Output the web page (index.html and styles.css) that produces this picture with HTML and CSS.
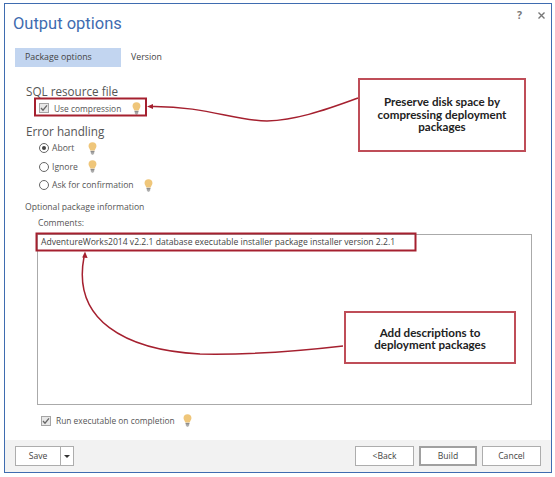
FILE: index.html
```html
<!DOCTYPE html>
<html lang="en">
<head>
  <meta charset="UTF-8">
  <title>Output options</title>
  <link rel="stylesheet" href="styles.css">
</head>
<body>
  <svg class="defs" width="0" height="0">
    <symbol id="bulb" viewBox="0 0 10 14">
      <path d="M5 0C2.2 0 .6 1.9.6 4.1c0 2 1.5 3.2 2 5.2h4.8c.5-2 2-3.200 2-5.200C9.400 1.900 7.800 0 5 0z" fill="#efc67a"/>
      <rect x="2.800" y="9.600" width="4.400" height="1.500" fill="#8d8d8d"/>
      <rect x="3.200" y="11.300" width="3.600" height="1.300" fill="#777"/>
      <rect x="4" y="12.800" width="2" height="1" fill="#999"/>
    </symbol>
  </svg>

  <div class="window">
    <div class="content">
      <div class="title-row">
        <h1>Output options</h1>
        <div class="window-btns">
          <span class="help">?</span>
          <svg class="close" width="7" height="7" viewBox="0 0 7 7"><path d="M.5 .5l6 6M6.500 .5l-6 6" stroke="#777" stroke-width="1.400"/></svg>
        </div>
      </div>

      <div class="tabs">
        <div class="tab active">Package options</div>
        <div class="tab">Version</div>
      </div>

      <h2 class="group-title first">SQL resource file</h2>
      <div class="option check-row">
        <span class="checkbox"><svg width="8" height="8" viewBox="0 0 8 8"><path d="M1 4l2 2.200L7 1.300" fill="none" stroke="#666" stroke-width="1.300"/></svg></span>
        <span>Use compression</span>
        <svg class="bulb"><use href="#bulb"/></svg>
      </div>

      <h2 class="group-title second">Error handling</h2>
      <div class="radios">
        <div class="option radio-row"><span class="radio selected"></span><span class="short">Abort</span><svg class="bulb"><use href="#bulb"/></svg></div>
        <div class="option radio-row"><span class="radio"></span><span class="short">Ignore</span><svg class="bulb"><use href="#bulb"/></svg></div>
        <div class="option radio-row"><span class="radio"></span><span>Ask for confirmation</span><svg class="bulb"><use href="#bulb"/></svg></div>
      </div>

      <div class="info-title">Optional package information</div>
      <div class="comments-label">Comments:</div>
      <div class="comments">AdventureWorks2014 v2.2.1 database executable installer package installer version 2.2.1</div>

      <div class="option run-row">
        <span class="checkbox"><svg width="8" height="8" viewBox="0 0 8 8"><path d="M1 4l2 2.200L7 1.300" fill="none" stroke="#666" stroke-width="1.300"/></svg></span>
        <span>Run executable on completion</span>
        <svg class="bulb"><use href="#bulb"/></svg>
      </div>
    </div>

    <div class="footer">
      <div class="split-btn">
        <button class="btn save-btn">Save</button>
        <button class="btn caret-btn"><span class="caret"></span></button>
      </div>
      <div class="footer-right">
        <button class="btn">&lt;Back</button>
        <button class="btn default">Build</button>
        <button class="btn">Cancel</button>
      </div>
    </div>
  </div>

  <!-- annotations on top of the dialog -->
  <svg class="arrows" width="555" height="477" viewBox="0 0 555 477">
    <rect x="35" y="98.500" width="111" height="17" class="mark"/>
    <rect x="36.500" y="233.500" width="379" height="17" class="mark"/>
    <path d="M358 98C320 112 295 120 267 121C235 121 205 106 152 106.500" class="line"/>
    <path d="M147 106.500l6-2.600v5.200z" fill="#a5202f"/>
    <path d="M343 346C300 351 250 355 200 354C125 350 72 320 84 257" class="line"/>
    <path d="M85 251.500l2.600 6.500l-5.400-.5z" fill="#a5202f"/>
  </svg>
  <div class="callout callout-disk">Preserve disk space by compressing deployment packages</div>
  <div class="callout callout-desc">Add descriptions to deployment packages</div>
</body>
</html>
```

FILE: styles.css
```css
body {
  margin: 0;
  width: 555px;
  height: 477px;
  background: white;
  font-family: "Open Sans", sans-serif;
  font-size: 8.600px;
  color: #555;
  overflow: hidden;
}
.defs {
  position: absolute;
}
.window {
  box-sizing: border-box;
  width: 548px;
  height: 470px;
  margin: 3px 0 0 4px;
  border: 1px solid #3f6cb0;
  display: flex;
  flex-direction: column;
}
.content {
  flex: 1;
  padding: 0 11px 0 10px;
}
.title-row {
  display: flex;
  justify-content: space-between;
  height: 44px;
}
h1 {
  margin: 6px 0 0 -2px;
  font-family: Roboto, sans-serif;
  font-size: 16.500px;
  font-weight: 400;
  line-height: 28px;
  color: #3f6cb0;
}
.window-btns {
  display: flex;
  align-items: center;
  gap: 16px;
  height: 22px;
  margin-right: -5px;
}
.help {
  font-size: 10.500px;
  font-weight: 700;
  color: #777;
}
.tabs {
  display: flex;
  height: 19px;
}
.tab {
  padding: 0 10px;
  font-size: 8.800px;
  line-height: 19px;
  color: #444;
}
.tab.active {
  width: 106px;
  box-sizing: border-box;
  background: #c2d5f0;
}
.group-title {
  margin: 0 0 0 11px;
  font-size: 11.700px;
  font-weight: 400;
  line-height: 16px;
  color: #555;
}
.group-title.first {
  margin-top: 16px;
}
.group-title.second {
  margin-top: 7px;
}
.option {
  display: flex;
  align-items: center;
}
.check-row {
  height: 16px;
  margin: 1px 0 0 24px;
  gap: 5px;
  font-size: 8.400px;
}
.checkbox {
  box-sizing: border-box;
  width: 10px;
  height: 10px;
  border: 1px solid #a5a5a5;
  background: #e8e8e8;
  display: flex;
  align-items: center;
  justify-content: center;
}
.bulb {
  width: 9px;
  height: 13px;
}
.check-row .bulb {
  margin-left: 6px;
}
.radios {
  margin: 0 0 0 24px;
}
.radio-row {
  height: 18.500px;
  gap: 3px;
}
.radio-row .bulb {
  margin-left: 7px;
}
.short {
  width: 26px;
}
.radio {
  box-sizing: border-box;
  width: 10px;
  height: 10px;
  border: 1px solid #666;
  border-radius: 50%;
  background: white;
  display: flex;
  align-items: center;
  justify-content: center;
}
.radio.selected::after {
  content: "";
  width: 4px;
  height: 4px;
  border-radius: 50%;
  background: #444;
}
.info-title {
  margin: 5px 0 0 10px;
  line-height: 14px;
}
.comments-label {
  margin: 2px 0 0 23px;
  line-height: 14px;
}
.comments {
  box-sizing: border-box;
  height: 171px;
  margin: 4px 8px 0 22px;
  padding: 1px 3px 0;
  border: 1px solid #aaa;
  line-height: 13px;
  color: #444;
}
.run-row {
  height: 16px;
  margin: 8px 0 0 26px;
  gap: 5px;
  font-size: 8.400px;
}
.run-row .bulb {
  margin-left: 3px;
}
.footer {
  display: flex;
  justify-content: space-between;
  align-items: flex-start;
  height: 32px;
  padding: 6px 10px 0;
  box-sizing: border-box;
  background: #f2f2f2;
}
.footer-right {
  display: flex;
  gap: 5px;
}
.split-btn {
  display: flex;
}
.btn {
  box-sizing: border-box;
  width: 59px;
  height: 20px;
  padding: 0;
  border: 1px solid #adadad;
  background: white;
  font-family: "Open Sans", sans-serif;
  font-size: 8.600px;
  color: #444;
}
.btn.default {
  width: 58px;
  border: 2px solid #a0a0a0;
}
.save-btn {
  width: 46px;
}
.caret-btn {
  width: 14px;
  margin-left: -1px;
}
.caret {
  display: block;
  width: 0;
  margin: 0 auto;
  border-left: 3px solid transparent;
  border-right: 3px solid transparent;
  border-top: 3px solid #333;
}
.arrows {
  position: absolute;
  left: 0;
  top: 0;
}
.mark {
  fill: none;
  stroke: #a5202f;
  stroke-width: 2;
}
.line {
  fill: none;
  stroke: #a5202f;
  stroke-width: 1.500;
}
.callout {
  position: absolute;
  box-sizing: border-box;
  display: flex;
  align-items: center;
  justify-content: center;
  padding: 0 12px;
  border: 2px solid #bf4d58;
  background: white;
  font-family: Lato, sans-serif;
  font-size: 11.600px;
  font-weight: 700;
  line-height: 12.500px;
  color: #222;
  text-align: center;
}
.callout-disk {
  left: 358px;
  top: 78px;
  width: 168px;
  height: 74px;
}
.callout-desc {
  left: 344px;
  top: 311px;
  width: 172px;
  height: 53px;
  padding-top: 3px;
}
```
